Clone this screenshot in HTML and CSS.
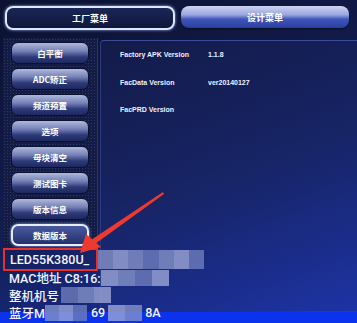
FILE: index.html
```html
<!DOCTYPE html>
<html lang="zh-CN">
<head>
    <meta charset="UTF-8">
    <meta name="viewport" content="width=device-width, initial-scale=1.0">
    <title>工厂菜单</title>
    <link rel="stylesheet" href="styles.css">
</head>
<body>

<div class="screen">
    <div class="tabs">
        <div class="tab active">工厂菜单</div>
        <div class="tab">设计菜单</div>
    </div>

    <div class="main">
        <div class="left">
            <div class="side">
                <div class="btn">白平衡</div>
                <div class="btn">ADC矫正</div>
                <div class="btn">频道预置</div>
                <div class="btn">选项</div>
                <div class="btn">母块清空</div>
                <div class="btn">测试图卡</div>
                <div class="btn">版本信息</div>
                <div class="btn selected">数据版本</div>
            </div>

            <div class="lines">
                <div class="line first">
                    <span class="model">LED55K380U_</span>
                    <span class="blur wide">
                        <i></i><i class="b"></i><i></i><i class="c"></i><i></i><i class="b"></i><i class="c"></i>
                    </span>
                </div>
                <div class="line">
                    <span>MAC地址 C8:16:</span>
                    <span class="blur mac">
                        <i class="b"></i><i></i><i class="c"></i><i class="b"></i>
                    </span>
                </div>
                <div class="line">
                    <span>整机机号</span>
                    <span class="blur sn">
                        <i class="c"></i><i></i><i class="b"></i>
                    </span>
                </div>
                <div class="line">
                    <span>蓝牙M</span>
                    <span class="blur bt1"><i></i><i class="b"></i><i class="c"></i></span>
                    <span>69</span>
                    <span class="blur bt2"><i class="b"></i><i></i></span>
                    <span>8A</span>
                </div>
            </div>
        </div>

        <div class="info">
            <div class="row"><span class="label">Factory APK Version</span><span>1.1.8</span></div>
            <div class="row"><span class="label">FacData Version</span><span>ver20140127</span></div>
            <div class="row"><span class="label">FacPRD Version</span><span></span></div>
        </div>
    </div>

    <div class="strip"></div>

    <svg class="arrow" width="357" height="323" viewBox="0 0 357 323">
        <polygon points="163,192 164,194 95,244 91,240" fill="#ec3a2e"/>
        <polygon points="80,253 86,234 101,247" fill="#ec3a2e"/>
    </svg>
</div>

</body>
</html>
```

FILE: styles.css
```css
body {
    margin: 0;
    background: #0a1030;
    font-family: "Liberation Sans", "Noto Sans CJK SC", sans-serif;
}
.screen {
    position: relative;
    width: 357px;
    height: 323px;
    overflow: hidden;
    background: linear-gradient(155deg, #0b1130 0%, #121c4c 45%, #1a2f98 85%, #2141c8 100%);
}
.tabs {
    display: flex;
    gap: 6px;
    padding: 6px 0 0 5px;
}
.tab {
    width: 168px;
    height: 22px;
    border-radius: 8px;
    display: flex;
    justify-content: center;
    align-items: center;
    color: #fff;
    font-family: "Noto Sans CJK SC", sans-serif;
    font-weight: bold;
    font-size: 9px;
    background: linear-gradient(#cdd4f2 0%, #9aa6e0 40%, #3f55b8 60%, #2a3ea0 100%);
    box-shadow: 0 1px 2px rgba(0, 0, 0, 0.5);
}
.tab.active {
    width: 166px;
    height: 20px;
    border: 2px solid #dfe7ff;
    background: linear-gradient(#1b2658, #0f173c);
    box-shadow: 0 0 3px #9fb4ff;
}
.main {
    display: flex;
    margin-top: 8px;
    height: 273px;
}
.left {
    width: 95px;
    flex-shrink: 0;
    margin-left: 3px;
    position: relative;
    z-index: 2;
}
.side {
    height: 208px;
    padding-top: 4px;
    box-sizing: border-box;
    display: flex;
    flex-direction: column;
    align-items: center;
    gap: 3.5px;
    background-color: #141c44;
    background-image: radial-gradient(#2a3670 0.8px, transparent 1px);
    background-size: 3px 3px;
    border-right: 1px solid #2a3670;
}
.btn {
    width: 78px;
    height: 23px;
    box-sizing: border-box;
    border-radius: 7px;
    border: 1px solid #0a1030;
    display: flex;
    justify-content: center;
    align-items: center;
    color: #fff;
    font-family: "Noto Sans CJK SC", sans-serif;
    font-weight: bold;
    font-size: 8.5px;
    background: linear-gradient(#b0b8da 0%, #7582b8 40%, #2e3a78 70%, #1e2860 100%);
}
.btn.selected {
    border: 2px solid #e4ecff;
    background: linear-gradient(#4a5aa0, #24306c);
    box-shadow: 0 0 3px #9fb4ff;
}
.lines {
    padding-top: 3px;
    font-family: Roboto, "Noto Sans CJK SC", sans-serif;
    font-size: 12.5px;
    font-weight: 500;
    color: #f2f4ff;
}
.line {
    display: flex;
    align-items: center;
    height: 17.5px;
    padding-left: 6px;
    white-space: nowrap;
}
.line > span {
    flex-shrink: 0;
}
.line.first {
    padding-left: 0;
    height: 20px;
}
.model {
    border: 2px solid #e8302a;
    padding: 0 2px 0 5px;
    height: 19px;
    line-height: 19px;
    width: 84px;
}
.blur {
    display: flex;
    height: 16px;
    opacity: 0.8;
}
.blur i {
    flex: 1;
    background: #8592c8;
}
.blur i.b {
    background: #9ca6d6;
}
.blur i.c {
    background: #6f7dbc;
}
.blur.wide {
    width: 106px;
    height: 19px;
}
.blur.mac {
    width: 68px;
    border-radius: 0 8px 8px 0;
}
.blur.sn {
    width: 50px;
    margin-left: 2px;
}
.blur.bt1 {
    width: 42px;
    margin-right: 4px;
}
.blur.bt2 {
    width: 34px;
    margin: 0 3px;
}
.info {
    flex: 1;
    margin-left: 2px;
    margin-top: 2px;
    border-top: 1px solid #3c4c98;
    border-left: 1px solid #2c3a80;
    border-top-left-radius: 4px;
    background: linear-gradient(160deg, #131b48 0%, #172466 50%, #1d33a4 100%);
    padding: 0 0 0 19px;
    color: #eef1ff;
    font-size: 7px;
    font-weight: bold;
}
.row {
    display: flex;
    height: 27.5px;
    align-items: center;
}
.label {
    width: 88px;
}
.strip {
    position: absolute;
    left: 0;
    right: 0;
    bottom: 0;
    height: 11px;
    background: #0b32ec;
    z-index: 1;
}
.arrow {
    position: absolute;
    left: 0;
    top: 0;
    z-index: 3;
}
```
